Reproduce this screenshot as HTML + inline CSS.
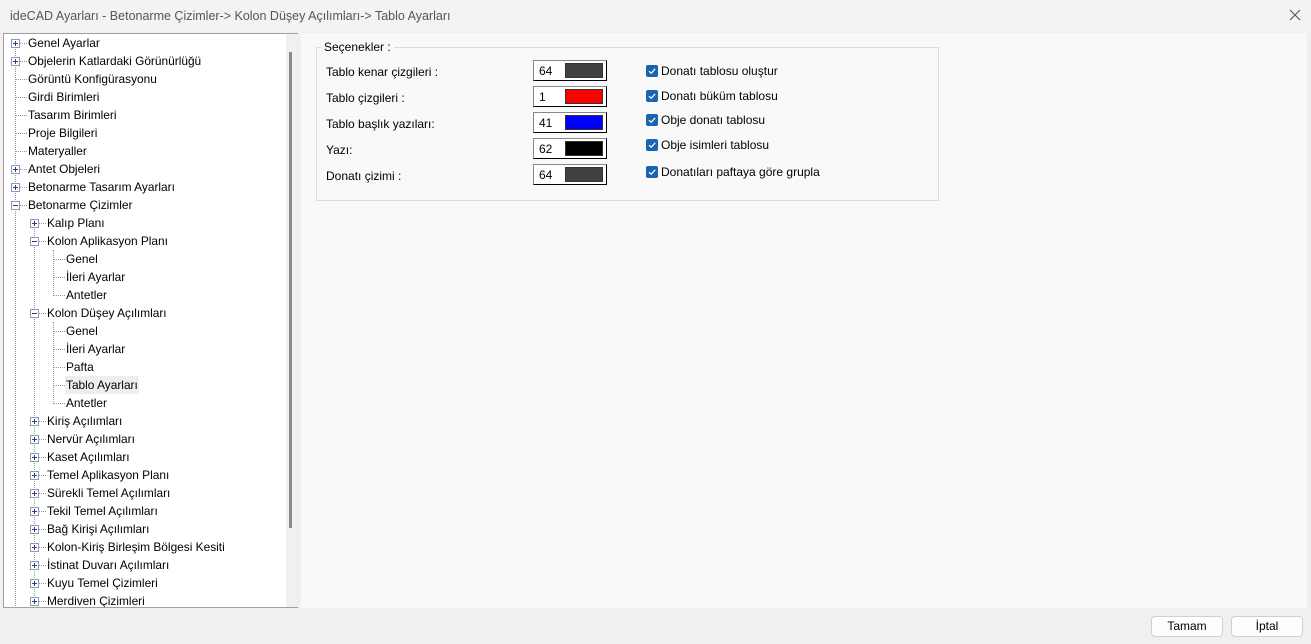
<!DOCTYPE html>
<html><head><meta charset="utf-8"><style>
*{margin:0;padding:0;box-sizing:border-box}
body{width:1311px;height:644px;background:#f0f0f0;font-family:"Liberation Sans",sans-serif;font-size:12px;color:#000;position:relative;overflow:hidden}
.abs{position:absolute}
.title{left:0;top:0;width:1311px;height:32px;background:#f3f3f3;}
.title span{position:absolute;left:10px;top:9px;color:#555;font-size:12.5px}
.tree{left:3px;top:33px;width:295px;height:575px;background:#fff;border:1px solid #a0a0a0;border-right:none;overflow:hidden}
.sb{left:282px;top:0;width:14px;height:575px;background:#f0f0f0}
.thumb{left:288px;top:18px;width:3px;height:476px;background:#8a8a8a}
.row{position:absolute;height:18px;line-height:18px;white-space:nowrap;color:#000;font-size:11.9px}
.box{position:absolute;width:9px;height:9px;border:1px solid #8c9cb8;background:#fff}
.box:before{content:"";position:absolute;left:1px;top:3px;width:5px;height:1px;background:#2b3f82}
.box.p:after{content:"";position:absolute;left:3px;top:1px;width:1px;height:5px;background:#2b3f82}
.vd{position:absolute;width:1px;border-left:1px dotted #999}
.hd{position:absolute;height:1px;border-top:1px dotted #999}
.right{left:301px;top:33px;width:1006px;height:575px;background:#f9f9f9}
.grp{left:316px;top:47px;width:623px;height:154px;border:1px solid #dcdcdc}
.lg{left:321px;top:40px;background:#f9f9f9;padding:0 3px;font-size:12px}
.lbl{position:absolute;left:326px;font-size:12px}
.cf{position:absolute;left:533px;width:74px;height:21px;border:1px solid #888;border-right-color:#000;border-bottom-color:#000;background:#fff;box-shadow:inset 1px 1px 0 #fff}
.cf .n{position:absolute;left:5px;top:3px;font-size:12px}
.cf .c{position:absolute;left:31px;top:2px;width:38px;height:15px;border:1px solid #333}
.chk{position:absolute;left:646px;width:12px;height:12px;background:#1a65b0;border-radius:2px}
.ct{position:absolute;left:661px;font-size:12px}
.btn{position:absolute;top:616px;height:21px;width:72px;border:1px solid #d0d0d0;border-radius:4px;background:#fdfdfd;text-align:center;line-height:19px;font-size:12px}
</style></head><body>
<div class="abs title"><span>ideCAD Ayarları - Betonarme Çizimler-&gt; Kolon Düşey Açılımları-&gt; Tablo Ayarları</span>
<svg class="abs" style="left:1289px;top:9px" width="12" height="12"><path d="M1 1L11 11M11 1L1 11" stroke="#555" stroke-width="1.1"/></svg></div>
<div class="abs tree">
<div class="abs sb"></div><div class="abs thumb" style="left:285px"></div>
<div id="t"></div>
</div>
<div class="abs right"></div>
<div class="abs grp"></div>
<div class="abs lg">Seçenekler :</div>

<div class="lbl" style="top:65px">Tablo kenar çizgileri :</div>
<div class="lbl" style="top:91px">Tablo çizgileri :</div>
<div class="lbl" style="top:117px">Tablo başlık yazıları:</div>
<div class="lbl" style="top:143px">Yazı:</div>
<div class="lbl" style="top:169px">Donatı çizimi :</div>

<div class="cf" style="top:60px"><span class="n">64</span><div class="c" style="background:#404040"></div></div>
<div class="cf" style="top:86px"><span class="n">1</span><div class="c" style="background:#ff0000"></div></div>
<div class="cf" style="top:112px"><span class="n">41</span><div class="c" style="background:#0000ff"></div></div>
<div class="cf" style="top:138px"><span class="n">62</span><div class="c" style="background:#000"></div></div>
<div class="cf" style="top:164px"><span class="n">64</span><div class="c" style="background:#404040"></div></div>

<div id="cb"></div>

<div class="btn" style="left:1151px">Tamam</div>
<div class="btn" style="left:1231px">İptal</div>
<script>
var items=[[0,'p','Genel Ayarlar'],[0,'p','Objelerin Katlardaki Görünürlüğü'],[0,'','Görüntü Konfigürasyonu'],[0,'','Girdi Birimleri'],[0,'','Tasarım Birimleri'],[0,'','Proje Bilgileri'],[0,'','Materyaller'],[0,'p','Antet Objeleri'],[0,'p','Betonarme Tasarım Ayarları'],[0,'m','Betonarme Çizimler'],[1,'p','Kalıp Planı'],[1,'m','Kolon Aplikasyon Planı'],[2,'','Genel'],[2,'','İleri Ayarlar'],[2,'','Antetler'],[1,'m','Kolon Düşey Açılımları'],[2,'','Genel'],[2,'','İleri Ayarlar'],[2,'','Pafta'],[2,'','Tablo Ayarları'],[2,'','Antetler'],[1,'p','Kiriş Açılımları'],[1,'p','Nervür Açılımları'],[1,'p','Kaset Açılımları'],[1,'p','Temel Aplikasyon Planı'],[1,'p','Sürekli Temel Açılımları'],[1,'p','Tekil Temel Açılımları'],[1,'p','Bağ Kirişi Açılımları'],[1,'p','Kolon-Kiriş Birleşim Bölgesi Kesiti'],[1,'p','İstinat Duvarı Açılımları'],[1,'p','Kuyu Temel Çizimleri'],[1,'p','Merdiven Çizimleri']];
var h='';
h+='<div class="vd" style="left:11px;top:10px;height:570px"></div>';
h+='<div class="vd" style="left:30px;top:190px;height:390px"></div>';
h+='<div class="vd" style="left:49px;top:216px;height:46px"></div>';
h+='<div class="vd" style="left:49px;top:288px;height:82px"></div>';
items.forEach(function(it,i){
 var y=18*i, cy=y+9, L=it[0];
 var bx=7+19*L, tx=23+19*L;
 h+='<div class="hd" style="left:'+(bx+4)+'px;top:'+cy+'px;width:'+(tx-bx-4)+'px"></div>';
 if(it[1]) h+='<div class="box '+(it[1]=='p'?'p':'')+'" style="left:'+bx+'px;top:'+(cy-4)+'px"></div>';
 var sel=it[2]=='Tablo Ayarları'&&i==19;
 h+='<div class="row" style="left:'+tx+'px;top:'+y+'px;padding:0 1px;'+(sel?'background:#eeeeee;':'')+'">'+it[2]+'</div>';
});
document.getElementById('t').innerHTML=h;
var cbs=[['Donatı tablosu oluştur',65],['Donatı büküm tablosu',90],['Obje donatı tablosu',114],['Obje isimleri tablosu',139],['Donatıları paftaya göre grupla',166]];
var c='';
cbs.forEach(function(b){
 c+='<div class="chk" style="top:'+b[1]+'px"><svg width="12" height="12" style="position:absolute;left:0;top:0"><path d="M3 6.2L5.2 8.3L9.2 3.8" stroke="#fff" stroke-width="1.2" fill="none"/></svg></div>';
 c+='<div class="ct" style="top:'+(b[1]-1)+'px">'+b[0]+'</div>';
});
document.getElementById('cb').innerHTML=c;
</script>
</body></html>
